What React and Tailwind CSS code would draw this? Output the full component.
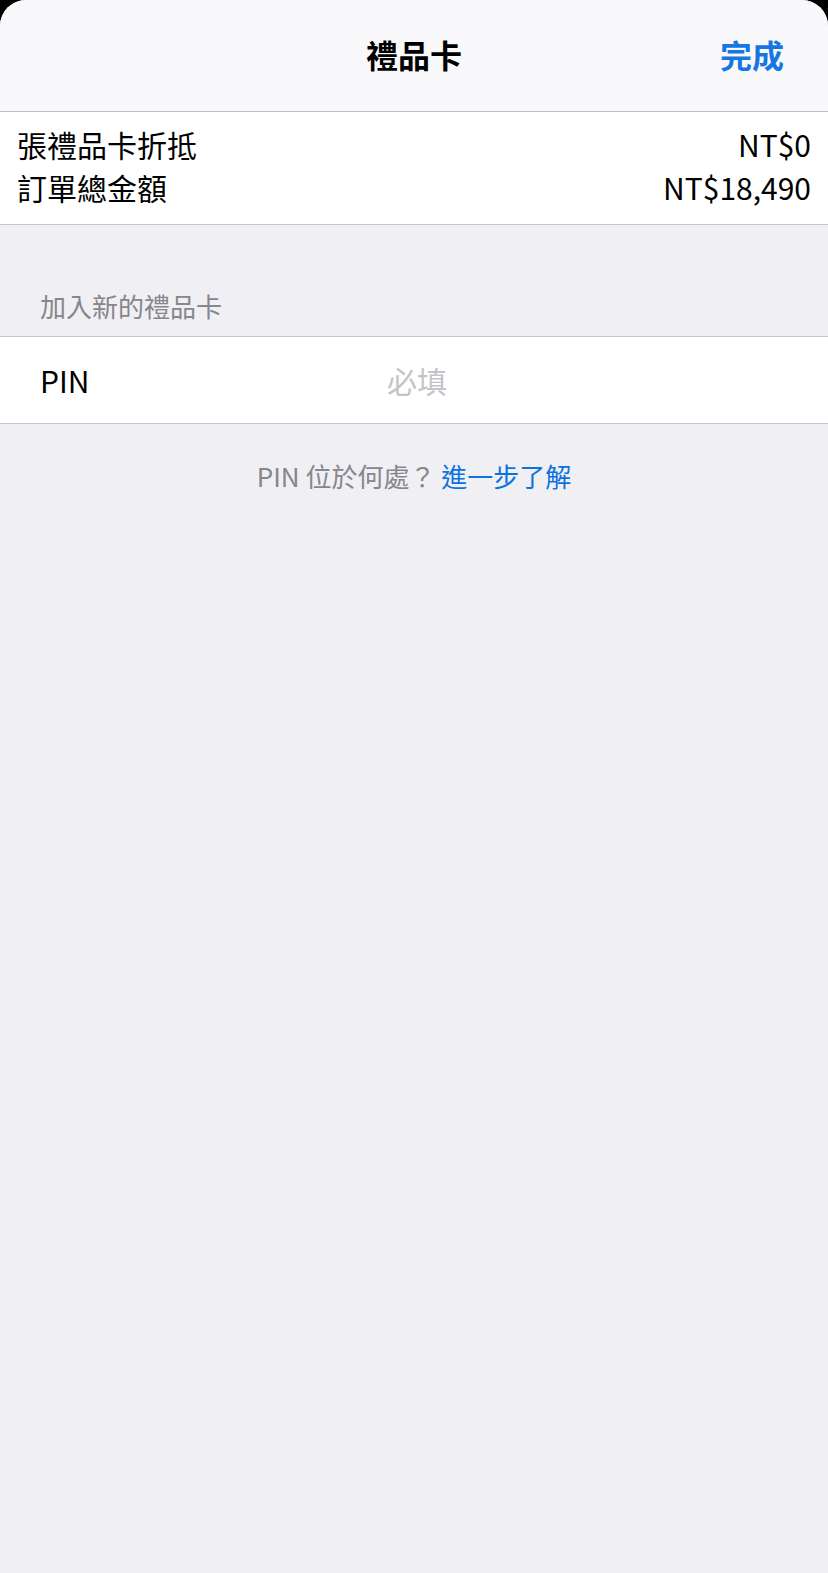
export default function App() {
  return (
    <div className="min-h-screen bg-black" style={{ fontFamily: '"Noto Sans CJK TC", "Noto Sans", sans-serif' }}>
      <div className="min-h-screen rounded-t-[26px] overflow-hidden bg-[#efeff4]">
        {/* Nav bar */}
        <div className="relative h-[112px] flex items-center justify-center pb-[4px] bg-[#f9f9fb] border-b border-[#bdbdc1]">
          <h1 className="text-[32px] font-bold text-black leading-none">禮品卡</h1>
          <button className="absolute right-[44px] top-[38px] text-[32px] font-bold text-[#1677e3] leading-none">
            完成
          </button>
        </div>

        {/* Summary */}
        <div className="bg-white px-[17px] pt-[11px] pb-[15px] border-b border-[#c8c7cc] text-[30px] leading-[43px] text-black">
          <div className="flex justify-between">
            <span>張禮品卡折抵</span>
            <span>NT$0</span>
          </div>
          <div className="flex justify-between">
            <span>訂單總金額</span>
            <span>NT$18,490</span>
          </div>
        </div>

        {/* Section header */}
        <div className="h-[111px] flex items-end px-[40px] pb-[12px]">
          <span className="text-[26px] leading-[36px] text-[#86868b]">加入新的禮品卡</span>
        </div>

        {/* PIN row */}
        <div className="bg-white h-[88px] flex items-center px-[40px] border-y border-[#c8c7cc]">
          <span className="w-[347px] text-[30px] text-black">PIN</span>
          <input
            className="flex-1 text-[30px] bg-transparent outline-none placeholder:text-[#c4c4c8]"
            placeholder="必填"
          />
        </div>

        {/* Footer */}
        <div className="pt-[34px] text-center text-[26px] leading-[36px]">
          <span className="text-[#86868b]">PIN 位於何處？ </span>
          <a className="text-[#0b72de]">進一步了解</a>
        </div>
      </div>
    </div>
  );
}
